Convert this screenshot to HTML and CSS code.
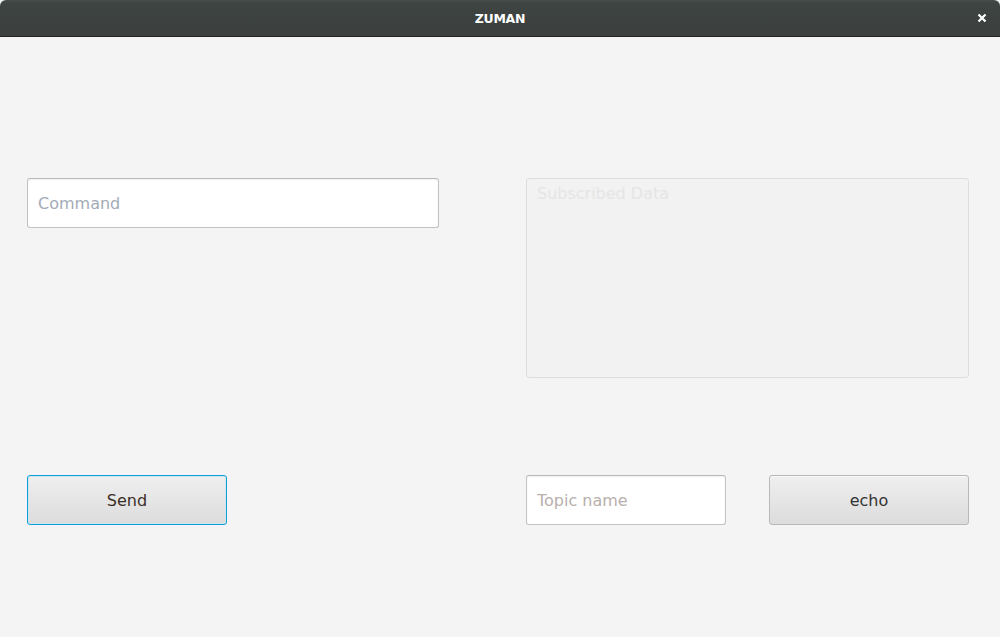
FILE: index.html
```html
<!DOCTYPE html>
<html lang="en">
<head>
<meta charset="utf-8">
<title>ZUMAN</title>
<link rel="stylesheet" href="styles.css">
</head>
<body>
<div class="window">
  <header class="titlebar">
    <span class="title">ZUMAN</span>
    <button class="close" aria-label="Close">
      <svg width="10" height="10" viewBox="0 0 10 10"><path d="M1.5 1.5 L8.5 8.5 M8.5 1.5 L1.5 8.5" stroke="#ffffff" stroke-width="2.2" stroke-linecap="butt"/></svg>
    </button>
  </header>
  <main class="content">
    <div class="row top-row">
      <div class="left-col">
        <input class="field command" type="text" placeholder="Command">
      </div>
      <div class="right-col">
        <textarea class="data" placeholder="Subscribed Data" disabled></textarea>
      </div>
    </div>
    <div class="row bottom-row">
      <div class="left-col">
        <button class="btn focused">Send</button>
      </div>
      <div class="right-col actions">
        <input class="field topic" type="text" placeholder="Topic name">
        <button class="btn">echo</button>
      </div>
    </div>
  </main>
</div>
</body>
</html>
```

FILE: styles.css
```css
* { box-sizing: border-box; }
html, body {
  margin: 0;
  padding: 0;
  width: 1000px;
  height: 637px;
  background: #f4f4f4;
  font-family: "DejaVu Sans", sans-serif;
}
.window {
  width: 1000px;
  height: 637px;
  display: flex;
  flex-direction: column;
  background: #f4f4f4;
}
.titlebar {
  height: 37px;
  flex: none;
  position: relative;
  display: flex;
  align-items: center;
  justify-content: center;
  background: linear-gradient(#474d4b 0, #3e4442 3px, #3b403f 100%);
  border-bottom: 1px solid #1f2322;
  border-radius: 6px 6px 0 0;
}
.title {
  color: #ffffff;
  font-weight: bold;
  font-size: 12.5px;
  letter-spacing: -0.3px;
  padding-top: 1px;
}
.close {
  position: absolute;
  right: 13px;
  top: 13px;
  width: 10px;
  height: 10px;
  padding: 0;
  border: 0;
  background: none;
  display: flex;
}
.content {
  flex: 1;
  padding: 141px 0 0 27px;
  display: flex;
  flex-direction: column;
  gap: 97px;
}
.row {
  display: flex;
  gap: 88px;
}
.left-col {
  width: 411px;
  flex: none;
}
.right-col {
  width: 443px;
  flex: none;
}
.field {
  display: block;
  height: 50px;
  background: #ffffff;
  border: 1px solid #c2c2c2;
  border-top-color: #b9b9b9;
  border-radius: 3px;
  box-shadow: inset 0 1px 2px rgba(0,0,0,0.06);
  padding: 0 10px;
  font-family: "DejaVu Sans", sans-serif;
  font-size: 16px;
  color: #333;
  outline: none;
}
.command {
  width: 412px;
}
.command::placeholder { color: #a3abb7; opacity: 1; }
.topic {
  width: 200px;
}
.topic::placeholder { color: #b8b0ad; opacity: 1; }
.data {
  display: block;
  width: 443px;
  height: 200px;
  resize: none;
  background: #f2f2f2;
  border: 1px solid #dedede;
  border-radius: 3px;
  padding: 5px 10px;
  font-family: "DejaVu Sans", sans-serif;
  font-size: 16px;
  line-height: 20px;
  outline: none;
}
.data::placeholder { color: #e5e5e5; opacity: 1; }
.actions {
  display: flex;
  gap: 43px;
}
.btn {
  display: block;
  width: 200px;
  height: 50px;
  border: 1px solid #b8b8b8;
  border-radius: 3px;
  background: linear-gradient(#efefef, #dcdcdc);
  box-shadow: inset 0 1px 0 rgba(255,255,255,0.6);
  font-family: "DejaVu Sans", sans-serif;
  font-size: 16px;
  color: #333333;
  padding: 0;
}
.btn.focused {
  border-color: #0d9fd8;
  box-shadow: inset 0 0 0 1px #cfe6ef;
  color: #3a2e26;
}
```
